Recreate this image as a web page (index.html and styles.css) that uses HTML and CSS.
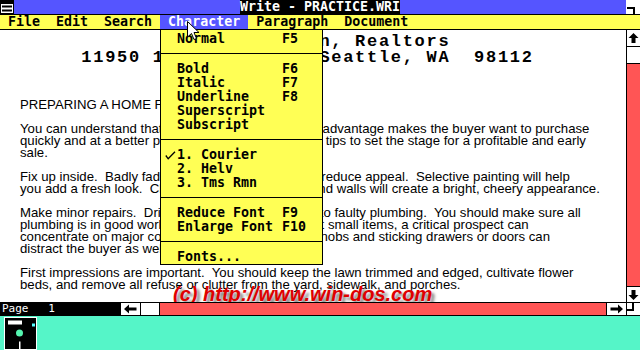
FILE: index.html
```html
<!DOCTYPE html>
<html lang="en">
<head>
    <meta charset="UTF-8">
    <title>Write - PRACTICE.WRI</title>
    <link rel="stylesheet" href="styles.css">
</head>
<body>
<div class="screen">
    <div class="window">
        <!-- Title bar -->
        <div class="titlebar">
            <div class="sysbox">
                <svg width="14" height="14" viewBox="0 0 14 14">
                    <rect x="0.5" y="0.5" width="13" height="13" fill="#fff" stroke="#000"/>
                    <rect x="1" y="1" width="12" height="3" fill="#000"/>
                    <rect x="2" y="5.5" width="10" height="2" fill="#000"/>
                    <rect x="2" y="9.5" width="10" height="2" fill="#000"/>
                </svg>
            </div>
            <div class="caption"><span>Write - PRACTICE.WRI</span></div>
            <div class="sizebox">
                <svg width="14" height="14" viewBox="0 0 14 14">
                    <rect x="1" y="7" width="8" height="2" fill="#000"/>
                    <rect x="7" y="7" width="2" height="7" fill="#000"/>
                </svg>
            </div>
        </div>

        <!-- Menu bar -->
        <div class="menubar">
            <span>File</span>
            <span>Edit</span>
            <span>Search</span>
            <span class="active">Character</span>
            <span>Paragraph</span>
            <span>Document</span>
        </div>

        <div class="main">
            <div class="doc">
                <div class="letterhead">
                    <div>Dow &amp; Thompson, Realtors</div>
                    <div>11950 12th Ave. NE, Seattle, WA  98112</div>
                </div>
                <p><span>PREPARING A HOME FOR SALE</span></p>
                <p>
                    <span>You can understand that a neat home's competitive advantage makes the buyer want to purchase</span>
                    <span>quickly and at a better price.  Here are some helpful tips to set the stage for a profitable and early</span>
                    <span>sale.</span>
                </p>
                <p>
                    <span>Fix up inside.  Badly faded wallpaper and paint can reduce appeal.  Selective painting will help</span>
                    <span>you add a fresh look.  Clean windows, neat floors and walls will create a bright, cheery appearance.</span>
                </p>
                <p>
                    <span>Make minor repairs.  Dripping faucets usually point to faulty plumbing.  You should make sure all</span>
                    <span>plumbing is in good working order.  If you do neglect small items, a critical prospect can</span>
                    <span>concentrate on major cosmetic flaws.  Loose door knobs and sticking drawers or doors can</span>
                    <span>distract the buyer as well.</span>
                </p>
                <p>
                    <span>First impressions are important.  You should keep the lawn trimmed and edged, cultivate flower</span>
                    <span>beds, and remove all refuse or clutter from the yard, sidewalk, and porches.</span>
                </p>
                <div class="watermark">(c) http://www.win-dos.com</div>
            </div>

            <!-- Vertical scroll bar -->
            <div class="vscroll">
                <div class="vbtn up">
                    <svg width="13" height="16" viewBox="0 0 13 16"><path d="M6.5 3 L11.5 8 H8.5 V13 H4.5 V8 H1.5 Z" fill="#000"/></svg>
                </div>
                <div class="vthumb"></div>
                <div class="vtrack"></div>
                <div class="vbtn down">
                    <svg width="13" height="15" viewBox="0 0 13 15"><path d="M6.5 13 L11.5 8 H8.5 V3 H4.5 V8 H1.5 Z" fill="#000"/></svg>
                </div>
            </div>
        </div>

        <!-- Status line + horizontal scroll bar -->
        <div class="statusbar">
            <div class="page">Page   1</div>
            <div class="hbtn left">
                <svg width="19" height="12" viewBox="0 0 19 12"><path d="M3 6 L8 1.5 V4.5 H15.5 V7.5 H8 V10.5 Z" fill="#000"/></svg>
            </div>
            <div class="hthumb"></div>
            <div class="htrack"></div>
            <div class="hbtn right">
                <svg width="19" height="12" viewBox="0 0 19 12"><path d="M16 6 L11 1.5 V4.5 H3.5 V7.5 H11 V10.5 Z" fill="#000"/></svg>
            </div>
            <div class="corner">
                <svg width="13" height="12" viewBox="0 0 13 12">
                    <rect x="5" y="0" width="2" height="8" fill="#000"/>
                    <rect x="0" y="6" width="7" height="2" fill="#000"/>
                </svg>
            </div>
        </div>

        <!-- Character menu, dropped down -->
        <div class="dropdown">
            <div class="item"><span></span><span>Normal</span><span>F5</span></div>
            <div class="sep"></div>
            <div class="item"><span></span><span>Bold</span><span>F6</span></div>
            <div class="item"><span></span><span>Italic</span><span>F7</span></div>
            <div class="item"><span></span><span>Underline</span><span>F8</span></div>
            <div class="item"><span></span><span>Superscript</span></div>
            <div class="item"><span></span><span>Subscript</span></div>
            <div class="sep"></div>
            <div class="item">
                <span class="check"><svg width="11" height="9" viewBox="0 0 11 9"><path d="M0.8 4.5 L3.2 7.8 L10 0.8" fill="none" stroke="#000" stroke-width="1.3"/></svg></span>
                <span>1. Courier</span>
            </div>
            <div class="item"><span></span><span>2. Helv</span></div>
            <div class="item"><span></span><span>3. Tms Rmn</span></div>
            <div class="sep"></div>
            <div class="item"><span></span><span>Reduce Font</span><span>F9</span></div>
            <div class="item"><span></span><span>Enlarge Font</span><span>F10</span></div>
            <div class="sep"></div>
            <div class="item"><span></span><span>Fonts...</span></div>
        </div>

        <svg class="cursor" width="13" height="20" viewBox="0 0 13 20">
            <path d="M0.5 0.5 V16 L4.5 12.5 L7 18.5 L9.5 17.5 L7 11.5 H12 Z" fill="#fff" stroke="#000"/>
        </svg>
    </div>

    <!-- Desktop with an iconic program -->
    <div class="desktop">
        <svg width="33" height="33" viewBox="0 0 33 33">
            <rect x="0.5" y="0.5" width="32" height="32" fill="#000" stroke="#fff"/>
            <rect x="4" y="3.5" width="14" height="4" fill="#fff"/>
            <rect x="28" y="6.5" width="3" height="3" fill="#55ffff"/>
            <circle cx="15.5" cy="16" r="3.5" fill="#55f5b0"/>
            <rect x="15" y="24.5" width="1.5" height="8" fill="#fff"/>
        </svg>
    </div>
</div>
</body>
</html>
```

FILE: styles.css
```css
body {
    margin: 0;
    overflow: hidden;
    background-color: #55f5c8;
    font-family: "DejaVu Sans Mono", monospace;
    color: #000000;
}

.screen {
    width: 640px;
    height: 350px;
    display: flex;
    flex-direction: column;
}

.window {
    position: relative;
    height: 316px;
    display: flex;
    flex-direction: column;
    background-color: #ffffff;
}

/* Title bar */
.titlebar {
    display: flex;
    height: 14px;
    background-color: #5555ff;
    border-bottom: 1px solid #000;
}

.sysbox, .sizebox {
    width: 14px;
    height: 14px;
    background-color: #ffffff;
}

.sysbox svg, .sizebox svg {
    display: block;
}

.caption {
    flex: 1;
    display: flex;
    justify-content: center;
}

.caption span {
    background-color: #000;
    color: #fff;
    font-weight: bold;
    font-size: 13.3px;
    line-height: 14px;
}

/* Menu bar */
.menubar {
    display: flex;
    height: 14px;
    background-color: #ffff55;
    border-bottom: 1px solid #000;
    font-weight: bold;
    font-size: 13.3px;
    line-height: 14px;
}

.menubar span {
    padding: 0 8px;
}

.menubar .active {
    background-color: #5555ff;
    color: #ffffff;
}

/* Document */
.main {
    flex: 1;
    min-height: 0;
    display: flex;
}

.doc {
    position: relative;
    flex: 1;
    overflow: hidden;
    padding: 4px 31px 0 20px;
}

.letterhead {
    font-family: "Liberation Mono", monospace;
    font-weight: bold;
    font-size: 17px;
    letter-spacing: 1.7px;
    line-height: 16px;
    text-align: center;
    margin-bottom: 33px;
}

.letterhead div {
    white-space: pre;
}

.doc p {
    margin: 0 0 12px;
    font-family: "Liberation Sans", Arial, sans-serif;
    font-size: 13.2px;
    line-height: 12px;
}

.doc p span {
    display: block;
    white-space: pre;
}

.watermark {
    position: absolute;
    left: 173px;
    top: 254px;
    font-family: "Liberation Sans", Arial, sans-serif;
    font-style: italic;
    font-weight: bold;
    font-size: 20px;
    line-height: 20px;
    color: #e00000;
    white-space: nowrap;
    text-shadow: 3px 3px 3px rgba(0, 0, 0, 0.5);
}

/* Scroll bars */
.vscroll {
    width: 13px;
    border-left: 1px solid #000;
    display: flex;
    flex-direction: column;
}

.vbtn svg, .hbtn svg, .corner svg {
    display: block;
}

.vbtn.up {
    height: 16px;
    border-bottom: 1px solid #000;
}

.vthumb {
    height: 16px;
    border-bottom: 1px solid #000;
}

.vtrack, .htrack {
    flex: 1;
    background-color: #ff5555;
}

.vbtn.down {
    height: 15px;
    border-top: 1px solid #000;
}

.statusbar {
    display: flex;
    height: 12px;
    border-top: 1px solid #000;
    border-bottom: 1px solid #000;
}

.page {
    width: 119px;
    padding-left: 2px;
    background-color: #000;
    color: #fff;
    font-size: 11px;
    line-height: 12px;
    white-space: pre;
}

.hbtn {
    width: 19px;
    background-color: #fff;
}

.hbtn.left {
    border-right: 1px solid #000;
}

.hbtn.right {
    border-left: 1px solid #000;
}

.hthumb {
    width: 18px;
    border-right: 1px solid #000;
}

.corner {
    width: 13px;
    border-left: 1px solid #000;
}

/* Dropped-down Character menu */
.dropdown {
    position: absolute;
    left: 160px;
    top: 30px;
    width: 161px;
    padding-top: 2px;
    background-color: #ffff55;
    border: 1px solid #000;
    border-top: none;
    font-weight: bold;
    font-size: 13.3px;
    line-height: 14px;
}

.item {
    display: grid;
    grid-template-columns: 16px 105px auto;
    height: 14px;
    white-space: pre;
}

.check {
    display: flex;
    align-items: center;
    padding-left: 4px;
}

.sep {
    height: 1px;
    background-color: #000;
    margin: 7px 0 8px;
}

.cursor {
    position: absolute;
    left: 187px;
    top: 21px;
}

/* Desktop */
.desktop {
    flex: 1;
    padding: 1px 0 0 4px;
}

.desktop svg {
    display: block;
}
```
